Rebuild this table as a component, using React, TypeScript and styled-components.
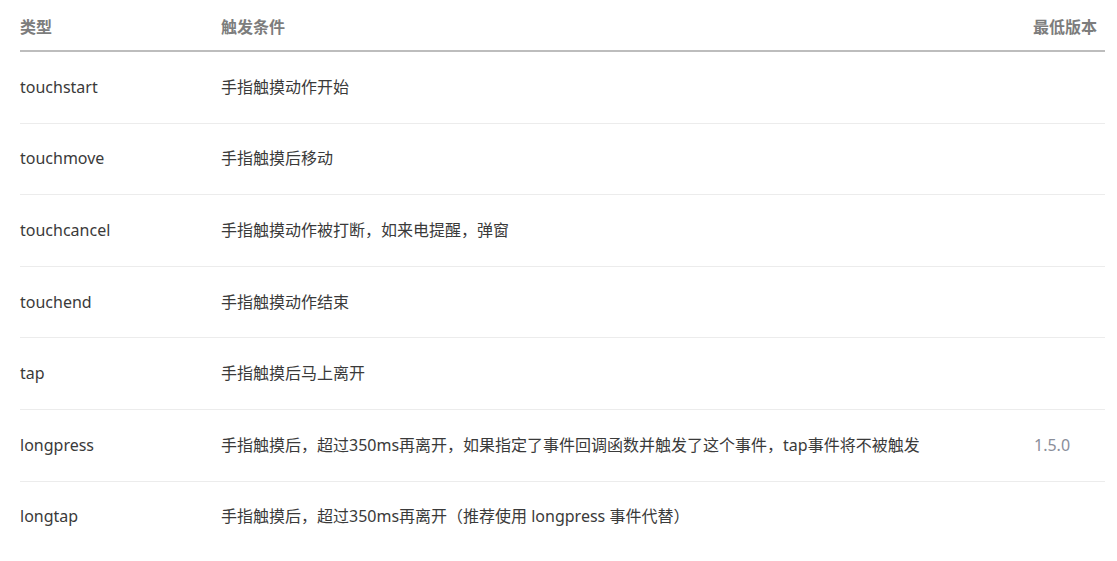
import styled, { createGlobalStyle } from "styled-components";

const GlobalStyle = createGlobalStyle`
	html, body {
		margin: 0;
		padding: 0;
		background: #ffffff;
	}
	body {
		font-family: "Noto Sans", "Noto Sans CJK SC", sans-serif;
	}
`;

interface EventRow {
	type: string;
	trigger: string;
	version?: string;
}

const rows: EventRow[] = [
	{ type: "touchstart", trigger: "手指触摸动作开始" },
	{ type: "touchmove", trigger: "手指触摸后移动" },
	{ type: "touchcancel", trigger: "手指触摸动作被打断，如来电提醒，弹窗" },
	{ type: "touchend", trigger: "手指触摸动作结束" },
	{ type: "tap", trigger: "手指触摸后马上离开" },
	{
		type: "longpress",
		trigger: "手指触摸后，超过350ms再离开，如果指定了事件回调函数并触发了这个事件，tap事件将不被触发",
		version: "1.5.0",
	},
	{ type: "longtap", trigger: "手指触摸后，超过350ms再离开（推荐使用 longpress 事件代替）" },
];

const Page = styled.div`
	padding: 0 12px 0 20px;
`;

const Table = styled.div`
	display: flex;
	flex-direction: column;
`;

const Row = styled.div<{ $head?: boolean }>`
	display: grid;
	grid-template-columns: 201px 1fr 72px;
	align-items: center;
	box-sizing: border-box;
	height: ${(p) => (p.$head ? "52px" : "71.6px")};
	padding-top: ${(p) => (p.$head ? "1px" : "0")};
	border-bottom: ${(p) => (p.$head ? "2px solid #bdbdbd" : "1px solid #ececec")};

	&:last-child {
		border-bottom-color: transparent;
	}
`;

const HeadCell = styled.div`
	font-size: 16px;
	font-weight: 700;
	color: #7d7d7d;
	font-family: "Noto Sans CJK SC", sans-serif;
	white-space: nowrap;
`;

const Cell = styled.div<{ $muted?: boolean }>`
	font-size: 16px;
	line-height: 24px;
	color: ${(p) => (p.$muted ? "#8a8e9a" : "#3a3a3a")};
	white-space: nowrap;
	padding-left: ${(p) => (p.$muted ? "1px" : "0")};
	margin-top: -1px;
`;

export default function App() {
	return (
		<>
			<GlobalStyle />
			<Page>
				<Table>
					<Row $head>
						<HeadCell>类型</HeadCell>
						<HeadCell>触发条件</HeadCell>
						<HeadCell>最低版本</HeadCell>
					</Row>
					{rows.map((row) => (
						<Row key={row.type}>
							<Cell>{row.type}</Cell>
							<Cell>{row.trigger}</Cell>
							<Cell $muted>{row.version ?? ""}</Cell>
						</Row>
					))}
				</Table>
			</Page>
		</>
	);
}
